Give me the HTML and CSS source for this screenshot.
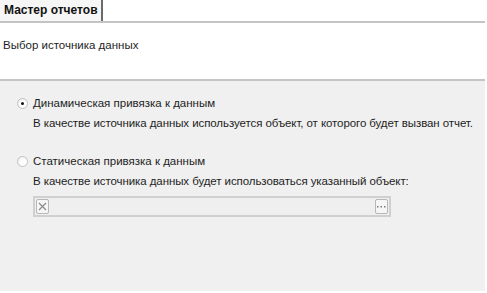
FILE: index.html
```html
<!DOCTYPE html>
<html lang="ru">
<head>
    <meta charset="UTF-8">
    <title>Мастер отчетов</title>
    <link rel="stylesheet" href="styles.css">
</head>
<body>
    <div class="wizard">
        <div class="tabs">
            <div class="tab">Мастер отчетов</div>
        </div>
        <div class="step-header">
            <p>Выбор источника данных</p>
        </div>
        <div class="step-body">
            <div class="option">
                <label class="radio-row">
                    <span class="radio checked"></span>
                    <span>Динамическая привязка к данным</span>
                </label>
                <p class="hint">В качестве источника данных используется объект, от которого будет вызван отчет.</p>
            </div>
            <div class="option">
                <label class="radio-row">
                    <span class="radio"></span>
                    <span>Статическая привязка к данным</span>
                </label>
                <p class="hint">В качестве источника данных будет использоваться указанный объект:</p>
                <div class="picker">
                    <span class="clear-btn">
                        <svg width="9" height="9" viewBox="0 0 9 9">
                            <path d="M1 1L8 8M8 1L1 8" stroke="#8a8a8a" stroke-width="1.2" fill="none"/>
                        </svg>
                    </span>
                    <span class="picker-value"></span>
                    <span class="browse-btn">
                        <svg width="9" height="3" viewBox="0 0 9 3">
                            <rect x="0" y="1" width="1.5" height="1.5" fill="#7a7a7a"/>
                            <rect x="3.5" y="1" width="1.5" height="1.5" fill="#7a7a7a"/>
                            <rect x="7" y="1" width="1.5" height="1.5" fill="#7a7a7a"/>
                        </svg>
                    </span>
                </div>
            </div>
        </div>
    </div>
</body>
</html>
```

FILE: styles.css
```css
*{
    box-sizing: border-box;
}
body{
    margin: 0;
    padding: 0;
    background: #ffffff;
    font-family: "Liberation Sans", Arial, sans-serif;
    font-size: 11.5px;
    color: #1e1e1e;
}
p{
    margin: 0;
}
.wizard{
    width: 485px;
    height: 291px;
    display: flex;
    flex-direction: column;
}
.tabs{
    display: flex;
    height: 23px;
    border-bottom: 2px solid #c4c4c4;
}
.tab{
    padding: 3px 3px 0 4px;
    background: #f6f6f6;
    border-right: 2px solid #6a6a6a;
    font-weight: 700;
    font-size: 12px;
    color: #111111;
}
.step-header{
    height: 58px;
    padding: 16px 0 0 3px;
    border-bottom: 2px solid #c4c4c4;
}
.step-body{
    flex: 1;
    background: #f0f0f0;
    padding: 14px 0 0 17px;
}
.option{
    margin-bottom: 22px;
}
.radio-row{
    display: flex;
    align-items: center;
    gap: 5px;
    height: 16px;
}
.radio{
    width: 11px;
    height: 11px;
    border-radius: 50%;
    border: 1px solid #c2c2c2;
    background: radial-gradient(circle at 65% 65%, #ffffff 40%, #e4e4e4 100%);
    position: relative;
}
.radio.checked::after{
    content: "";
    position: absolute;
    left: 3px;
    top: 3px;
    width: 3px;
    height: 3px;
    border-radius: 50%;
    background: #111111;
}
.hint{
    margin: 4px 0 0 16px;
    line-height: 16px;
    letter-spacing: -0.08px;
}
.picker{
    margin: 7px 0 0 16px;
    width: 358px;
    height: 21px;
    display: flex;
    align-items: center;
    padding: 0 1px;
    border: 2px solid #d0d0d0;
    background: #efefef;
}
.clear-btn,
.browse-btn{
    width: 13px;
    height: 15px;
    border: 1px solid #b8b8b8;
    border-radius: 2px;
    background: #f6f6f6;
    display: flex;
    align-items: center;
    justify-content: center;
}
.picker-value{
    flex: 1;
}
```
